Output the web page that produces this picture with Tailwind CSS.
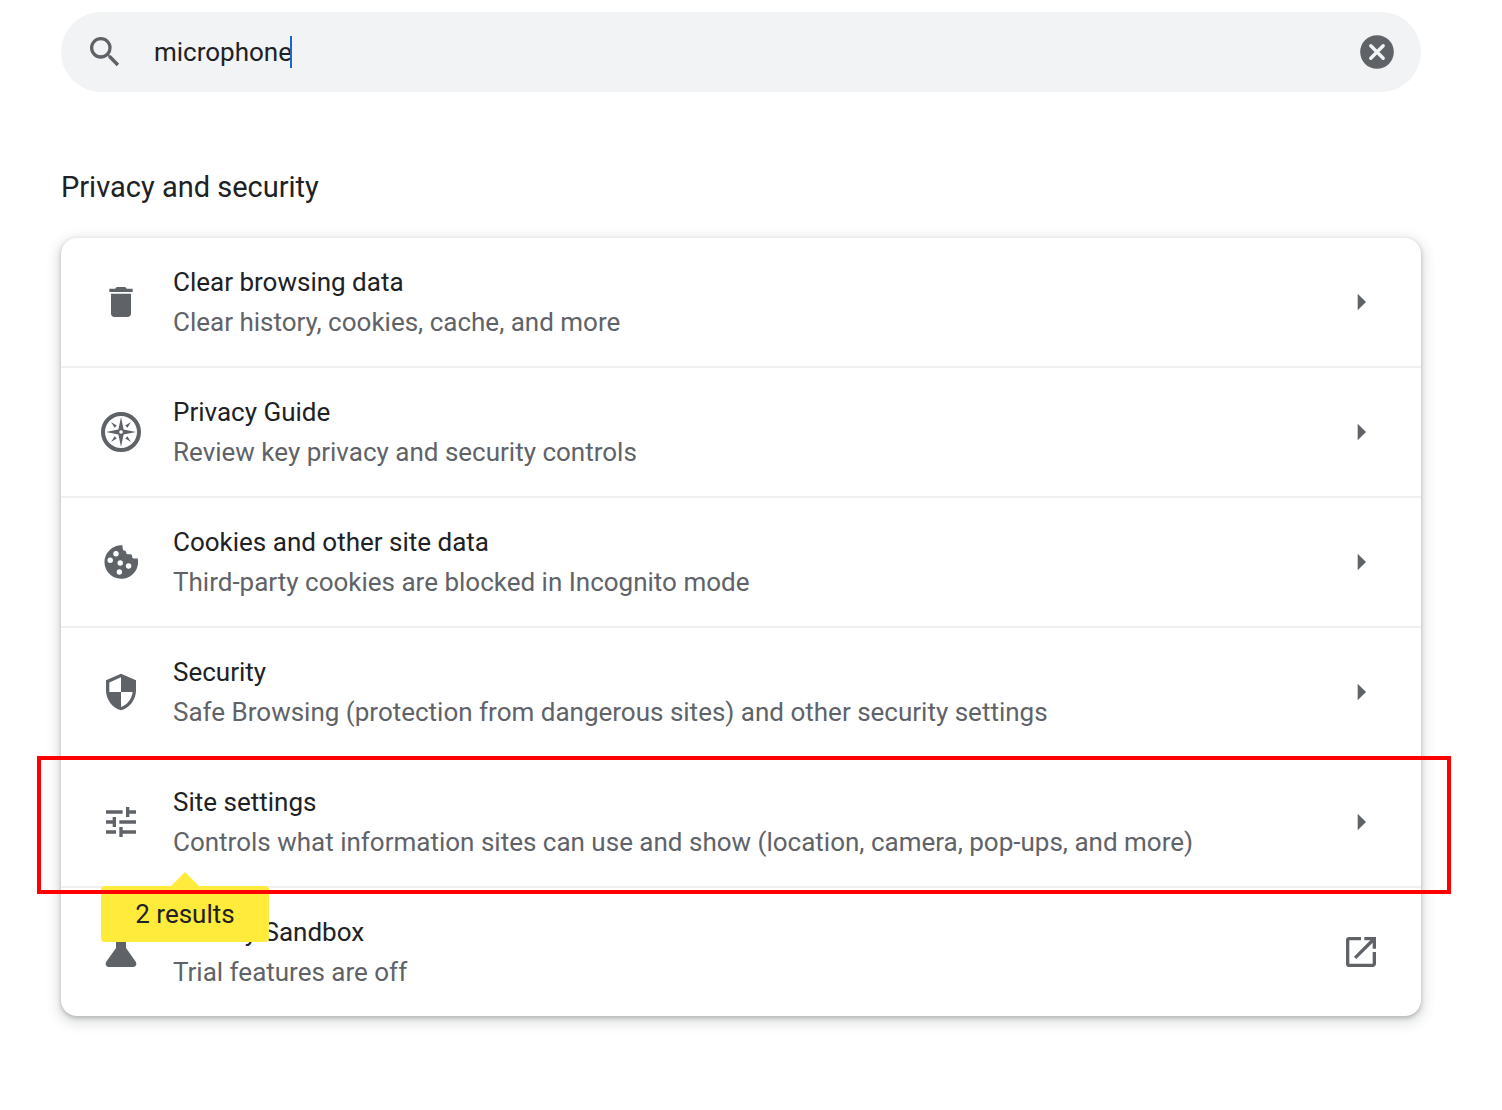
<!DOCTYPE html>
<html lang="en">
<head>
    <meta charset="UTF-8">
    <meta name="viewport" content="width=device-width, initial-scale=1.0">
    <title>Settings - Privacy and security</title>
    <script src="https://cdn.jsdelivr.net/npm/@tailwindcss/browser@4"></script>
</head>

<body class="bg-white min-h-screen pt-3 pb-20 pl-[61px] pr-[81px] font-[Roboto,sans-serif] text-[26px] leading-10 text-[#202124]">
    <!-- Search bar -->
    <header class="flex items-center h-20 px-6 rounded-full bg-[#f1f3f4]">
        <label for="search" aria-label="Search settings">
            <svg class="size-10 fill-[#5f6368]" viewBox="0 0 24 24"><path d="M15.5 14h-.79l-.28-.27A6.471 6.471 0 0 0 16 9.5 6.5 6.5 0 1 0 9.5 16c1.61 0 3.09-.59 4.23-1.57l.27.28v.79l5 4.99L20.49 19l-4.99-5zm-6 0C7.01 14 5 11.99 5 9.5S7.01 5 9.5 5 14 7.01 14 9.5 11.99 14 9.5 14z"/></svg>
        </label>
        <input id="search" type="text" value="microphone" class="ml-[29px] h-10 bg-transparent outline-none field-sizing-content">
        <span class="shrink-0 w-0.5 h-8 -ml-0.5 bg-[#1967d2]"></span>
        <button type="button" aria-label="Clear search" class="ml-auto">
            <svg class="size-10" viewBox="0 0 40 40">
                <circle cx="20" cy="20" r="16.8" fill="#5f6368"/>
                <path d="M13.8 13.8l12.4 12.4M26.2 13.8L13.8 26.2" stroke="#f1f3f4" stroke-width="3.4" stroke-linecap="round"/>
            </svg>
        </button>
    </header>

    <main>
        <h1 class="pt-[75px] pb-[31px] text-[29px] leading-10">Privacy and security</h1>

        <!-- Settings list -->
        <div class="rounded-2xl bg-white divide-y-2 divide-[#f0f0f0] shadow-[0_2px_4px_rgba(60,64,67,0.3),0_4px_12px_4px_rgba(60,64,67,0.15)]">
            <a href="#clear" class="flex items-center px-10 py-6">
                <svg class="size-10 fill-[#5f6368]" viewBox="0 0 24 24"><path d="M6 19c0 1.1.9 2 2 2h8c1.1 0 2-.9 2-2V7H6v12zM19 4h-3.5l-1-1h-5l-1 1H5v2h14V4z"/></svg>
                <div class="flex-1 ml-8">
                    <div>Clear browsing data</div>
                    <div class="text-[#5f6368]">Clear history, cookies, cache, and more</div>
                </div>
                <svg class="size-10 fill-[#5f6368]" viewBox="0 0 24 24"><path d="M10 7l5 5-5 5z"/></svg>
            </a>

            <a href="#guide" class="flex items-center px-10 py-6">
                <svg class="size-10 fill-[#5f6368]" viewBox="0 0 40 40">
                    <circle cx="20" cy="20" r="18" fill="none" stroke="#5f6368" stroke-width="4"/>
                    <path fill-rule="evenodd" d="M20 5l2.6 12.4L35 20l-12.4 2.600L20 35l-2.600-12.400L5 20l12.400-2.600zM20 18.200a1.800 1.800 0 1 0 0 3.600 1.800 1.800 0 0 0 0-3.600z"/>
                    <path d="M10 10l5.800 3.600-2.200 2.200zM30 10l-5.800 3.600 2.200 2.200zM10 30l5.800-3.600-2.200-2.200zM30 30l-5.800-3.600 2.200-2.200z"/>
                </svg>
                <div class="flex-1 ml-8">
                    <div>Privacy Guide</div>
                    <div class="text-[#5f6368]">Review key privacy and security controls</div>
                </div>
                <svg class="size-10 fill-[#5f6368]" viewBox="0 0 24 24"><path d="M10 7l5 5-5 5z"/></svg>
            </a>

            <a href="#cookies" class="flex items-center px-10 py-6">
                <svg class="size-10 fill-[#5f6368]" viewBox="0 0 40 40">
                    <path d="M21.5 3.3A16.8 16.8 0 1 0 36.7 16.5H32.5Q31 16.3 31 13.5Q30.8 12 28.5 12.2H26.5Q25 12 25 10Q24.8 8.6 23 8.6Q21.3 8 21.5 3.3z"/>
                    <g fill="#fff">
                        <circle cx="15" cy="11.7" r="2.7"/>
                        <circle cx="9.2" cy="18.3" r="2.7"/>
                        <circle cx="19.2" cy="21" r="2.7"/>
                        <circle cx="27.6" cy="24" r="2.7"/>
                        <circle cx="18.4" cy="30" r="2.7"/>
                    </g>
                </svg>
                <div class="flex-1 ml-8">
                    <div>Cookies and other site data</div>
                    <div class="text-[#5f6368]">Third-party cookies are blocked in Incognito mode</div>
                </div>
                <svg class="size-10 fill-[#5f6368]" viewBox="0 0 24 24"><path d="M10 7l5 5-5 5z"/></svg>
            </a>

            <a href="#security" class="flex items-center px-10 py-6">
                <svg class="size-10 fill-[#5f6368]" viewBox="0 0 24 24"><path d="M12 1L3 5v6c0 5.55 3.84 10.74 9 12 5.16-1.26 9-6.45 9-12V5l-9-4zm0 10.99h7c-.53 4.12-3.28 7.79-7 8.94V12H5V6.3l7-3.11v8.8z"/></svg>
                <div class="flex-1 ml-8">
                    <div>Security</div>
                    <div class="text-[#5f6368]">Safe Browsing (protection from dangerous sites) and other security settings</div>
                </div>
                <svg class="size-10 fill-[#5f6368]" viewBox="0 0 24 24"><path d="M10 7l5 5-5 5z"/></svg>
            </a>

            <!-- Highlighted search match -->
            <div class="relative">
                <a href="#site" class="flex items-center px-10 py-6">
                    <svg class="size-10 fill-[#5f6368]" viewBox="0 0 24 24"><path d="M3 17v2h6v-2H3zM3 5v2h10V5H3zm10 16v-2h8v-2h-8v-2h-2v6h2zM7 9v2H3v2h4v2h2V9H7zm14 4v-2H11v2h10zm-6-4h2V7h4V5h-4V3h-2v6z"/></svg>
                    <div class="flex-1 ml-8">
                        <div>Site settings</div>
                        <div class="text-[#5f6368]">Controls what information sites can use and show (location, camera, pop-ups, and more)</div>
                    </div>
                    <svg class="size-10 fill-[#5f6368]" viewBox="0 0 24 24"><path d="M10 7l5 5-5 5z"/></svg>
                </a>
                <div class="absolute z-10 left-10 top-full w-42 py-2 rounded-sm bg-[#ffeb3b] text-center">
                    <svg class="absolute bottom-full left-1/2 -translate-x-1/2 w-7 h-3.5 fill-[#ffeb3b]" viewBox="0 0 28 14"><path d="M0 14L14 0l14 14z"/></svg>
                    2 results
                </div>
                <div class="absolute z-20 -top-0.5 -bottom-2 -left-6 -right-[30px] border-4 border-[#ff0000] pointer-events-none"></div>
            </div>

            <a href="#sandbox" class="flex items-center px-10 py-6">
                <svg class="size-10 fill-[#5f6368]" viewBox="0 0 40 40"><path d="M13 5h14v3.3h-2V16l9.6 13.6c1.6 2.5.4 5.4-2.4 5.4H7.800c-2.800 0-4-2.900-2.400-5.400L15 16V8.300h-2z"/></svg>
                <div class="flex-1 ml-8">
                    <div>Privacy Sandbox</div>
                    <div class="text-[#5f6368]">Trial features are off</div>
                </div>
                <svg class="size-10 fill-[#5f6368]" viewBox="0 0 24 24"><path d="M19 19H5V5h7V3H5a2 2 0 0 0-2 2v14a2 2 0 0 0 2 2h14c1.1 0 2-.9 2-2v-7h-2v7zM14 3v2h3.59l-9.83 9.83 1.41 1.41L19 6.41V10h2V3h-7z"/></svg>
            </a>
        </div>
    </main>
</body>
</html>
